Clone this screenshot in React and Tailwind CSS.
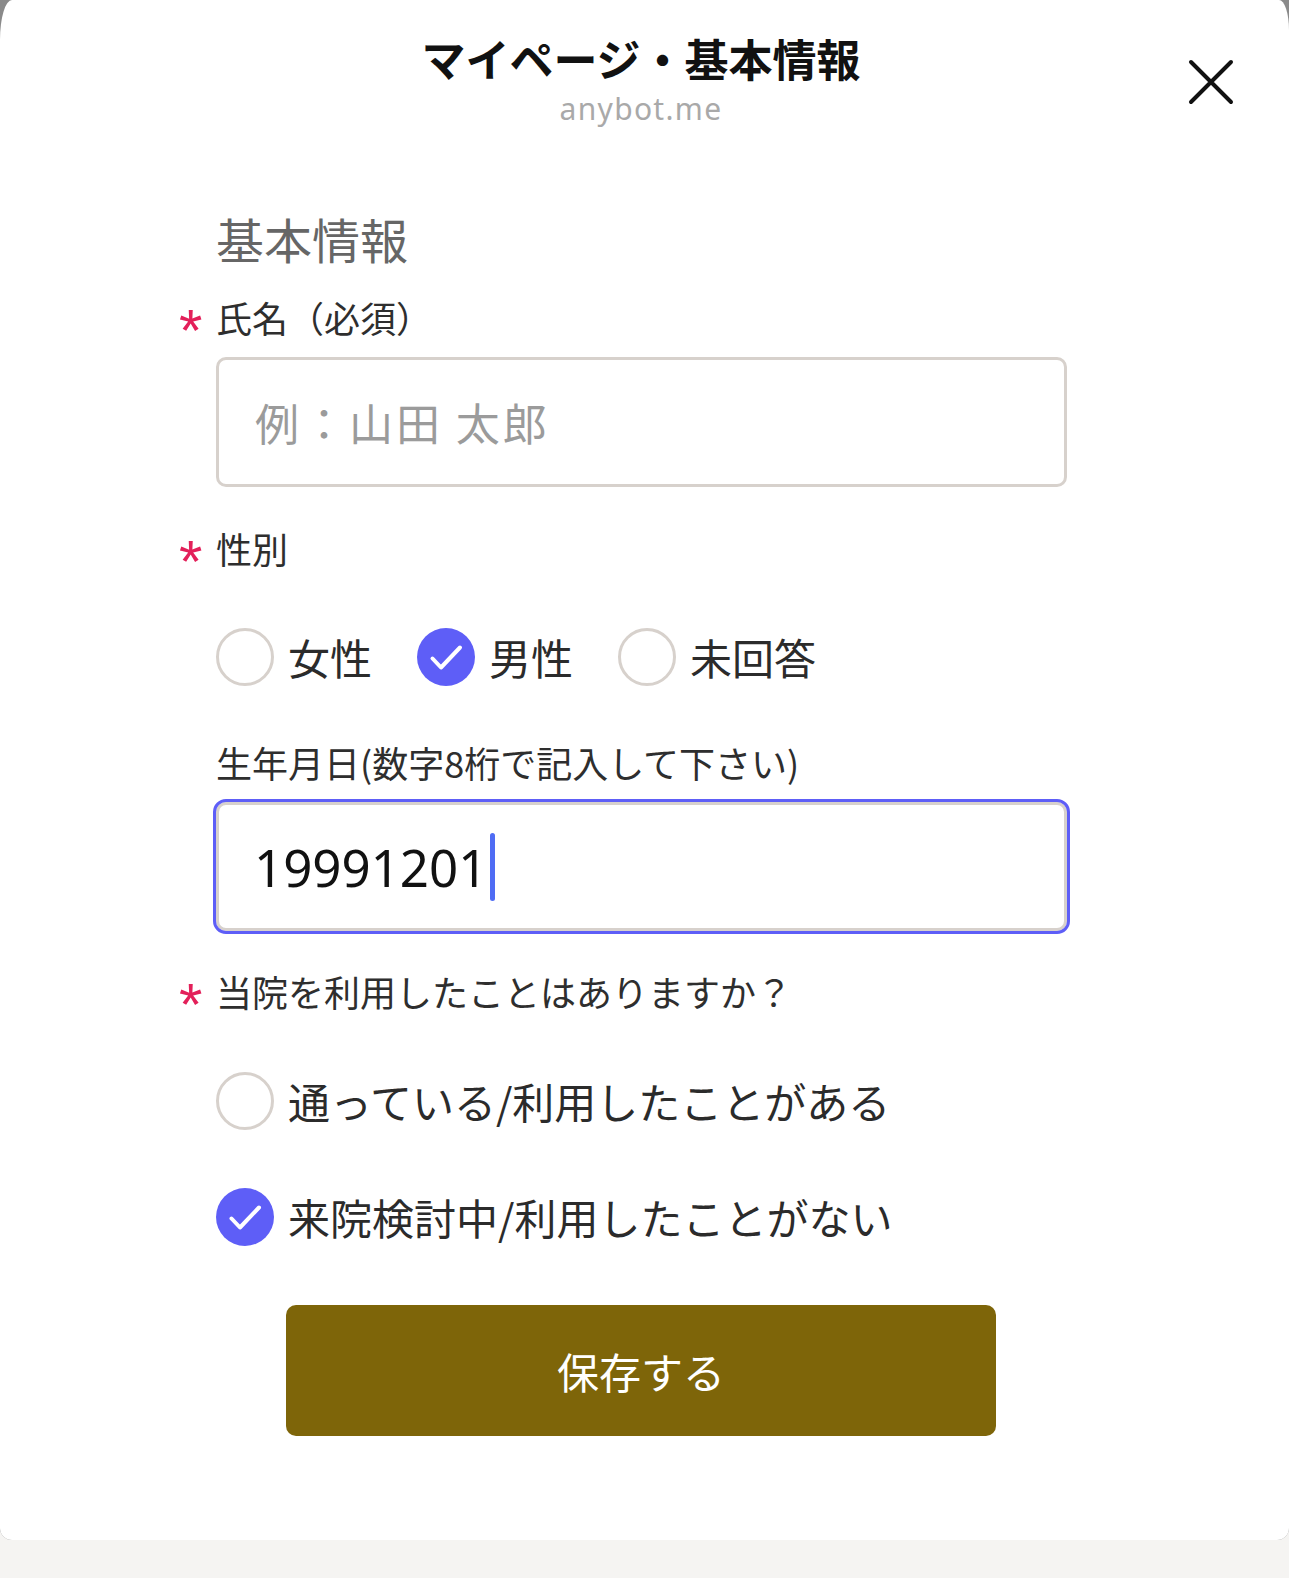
import React from "react";

const font = { fontFamily: '"Noto Sans CJK JP", "Noto Sans", sans-serif' };

function Check() {
  return (
    <span className="flex h-[58px] w-[58px] shrink-0 items-center justify-center rounded-full bg-[#5e5ef7]">
      <svg width="58" height="58" viewBox="0 0 58 58" fill="none">
        <path d="M15.5 30.5 L24 39.5 L43 19.5" stroke="#fff" strokeWidth="4" strokeLinecap="round" strokeLinejoin="round" />
      </svg>
    </span>
  );
}

function Empty() {
  return <span className="block h-[58px] w-[58px] shrink-0 rounded-full border-[3px] border-[#d7d1cc] bg-white" />;
}

function Radio({ checked, label }) {
  return (
    <div className="flex h-[58px] items-center gap-[14px]">
      {checked ? <Check /> : <Empty />}
      <span className="text-[42px] leading-[58px] text-[#2b2b2b]">{label}</span>
    </div>
  );
}

function Label({ required, children, className = "" }) {
  return (
    <div className={"flex h-[40px] items-start " + className}>
      {required && (
        <span
          className="-ml-[37px] mt-[14px] w-[37px] text-[60px] leading-[40px] text-[#e3205a]"
          style={{ fontFamily: '"Liberation Sans", sans-serif' }}
        >
          *
        </span>
      )}
      <span className="text-[36px] leading-[40px] text-[#2e2e2e]">{children}</span>
    </div>
  );
}

export default function App() {
  return (
    <div className="min-h-[1578px] w-full bg-[#f5f4f2]" style={font}>
      <div className="rounded-b-[12px] bg-[#8a8a8a]">
        <div className="rounded-tl-[12px_40px] rounded-tr-[10px_30px] rounded-b-[12px] bg-white pb-[104px]">
          <div className="w-[1282px]">
            <div className="grid grid-cols-[1fr_auto_1fr] pt-[34px]">
              <div />
              <div className="flex flex-col items-center">
                <div className="text-[44px] font-bold leading-[48px] text-[#111]">マイページ・基本情報</div>
                <div
                  className="mt-[9px] text-[30px] leading-[36px] tracking-[1.3px] text-[#a9a9a9]"
                  style={{ fontFamily: '"Noto Sans", sans-serif' }}
                >
                  anybot.me
                </div>
              </div>
              <div className="flex justify-end pr-[48px]">
                <svg className="mt-[25px]" width="46" height="46" viewBox="0 0 46 46" fill="none">
                  <path d="M3 3 L43 43 M43 3 L3 43" stroke="#111" strokeWidth="4" strokeLinecap="round" />
                </svg>
              </div>
            </div>

            <div className="pl-[216px] pr-[215px]">
              <div className="mt-[83px] text-[48px] leading-[56px] text-[#666]">基本情報</div>

              <Label required className="mt-[31px]">氏名（必須）</Label>
              <div className="mt-[20px] flex h-[130px] items-center rounded-[10px] border-[3px] border-[#d7d1cc] pl-[36px]">
                <span className="text-[44px] tracking-[3px] text-[#9b9b9b]">例：山田 太郎</span>
              </div>

              <Label required className="mt-[41px]">性別</Label>
              <div className="mt-[60px] flex items-center gap-[45px]">
                <Radio label="女性" />
                <Radio checked label="男性" />
                <Radio label="未回答" />
              </div>

              <Label className="mt-[56px]">生年月日(数字8桁で記入して下さい)</Label>
              <div className="mt-[20px] flex h-[129px] items-center rounded-[10px] border-[3px] border-[#d7d1cc] pl-[35px] outline-[3px] outline-[#5e5ef7]">
                <span
                  className="text-[51px] leading-[68px] text-[#111]"
                  style={{ fontFamily: '"Noto Sans", sans-serif' }}
                >
                  19991201
                </span>
                <span className="ml-[3px] inline-block h-[68px] w-[5px] rounded-[3px] bg-[#4f6cf4]" />
              </div>

              <Label required className="mt-[40px]">当院を利用したことはありますか？</Label>
              <div className="mt-[61px]">
                <Radio label="通っている/利用したことがある" />
              </div>
              <div className="mt-[58px]">
                <Radio checked label="来院検討中/利用したことがない" />
              </div>
            </div>

            <div className="mt-[59px] flex justify-center">
              <button className="flex h-[131px] w-[710px] items-center justify-center rounded-[10px] bg-[#7e6509] text-[42px] text-white">
                保存する
              </button>
            </div>
          </div>
        </div>
      </div>
    </div>
  );
}
